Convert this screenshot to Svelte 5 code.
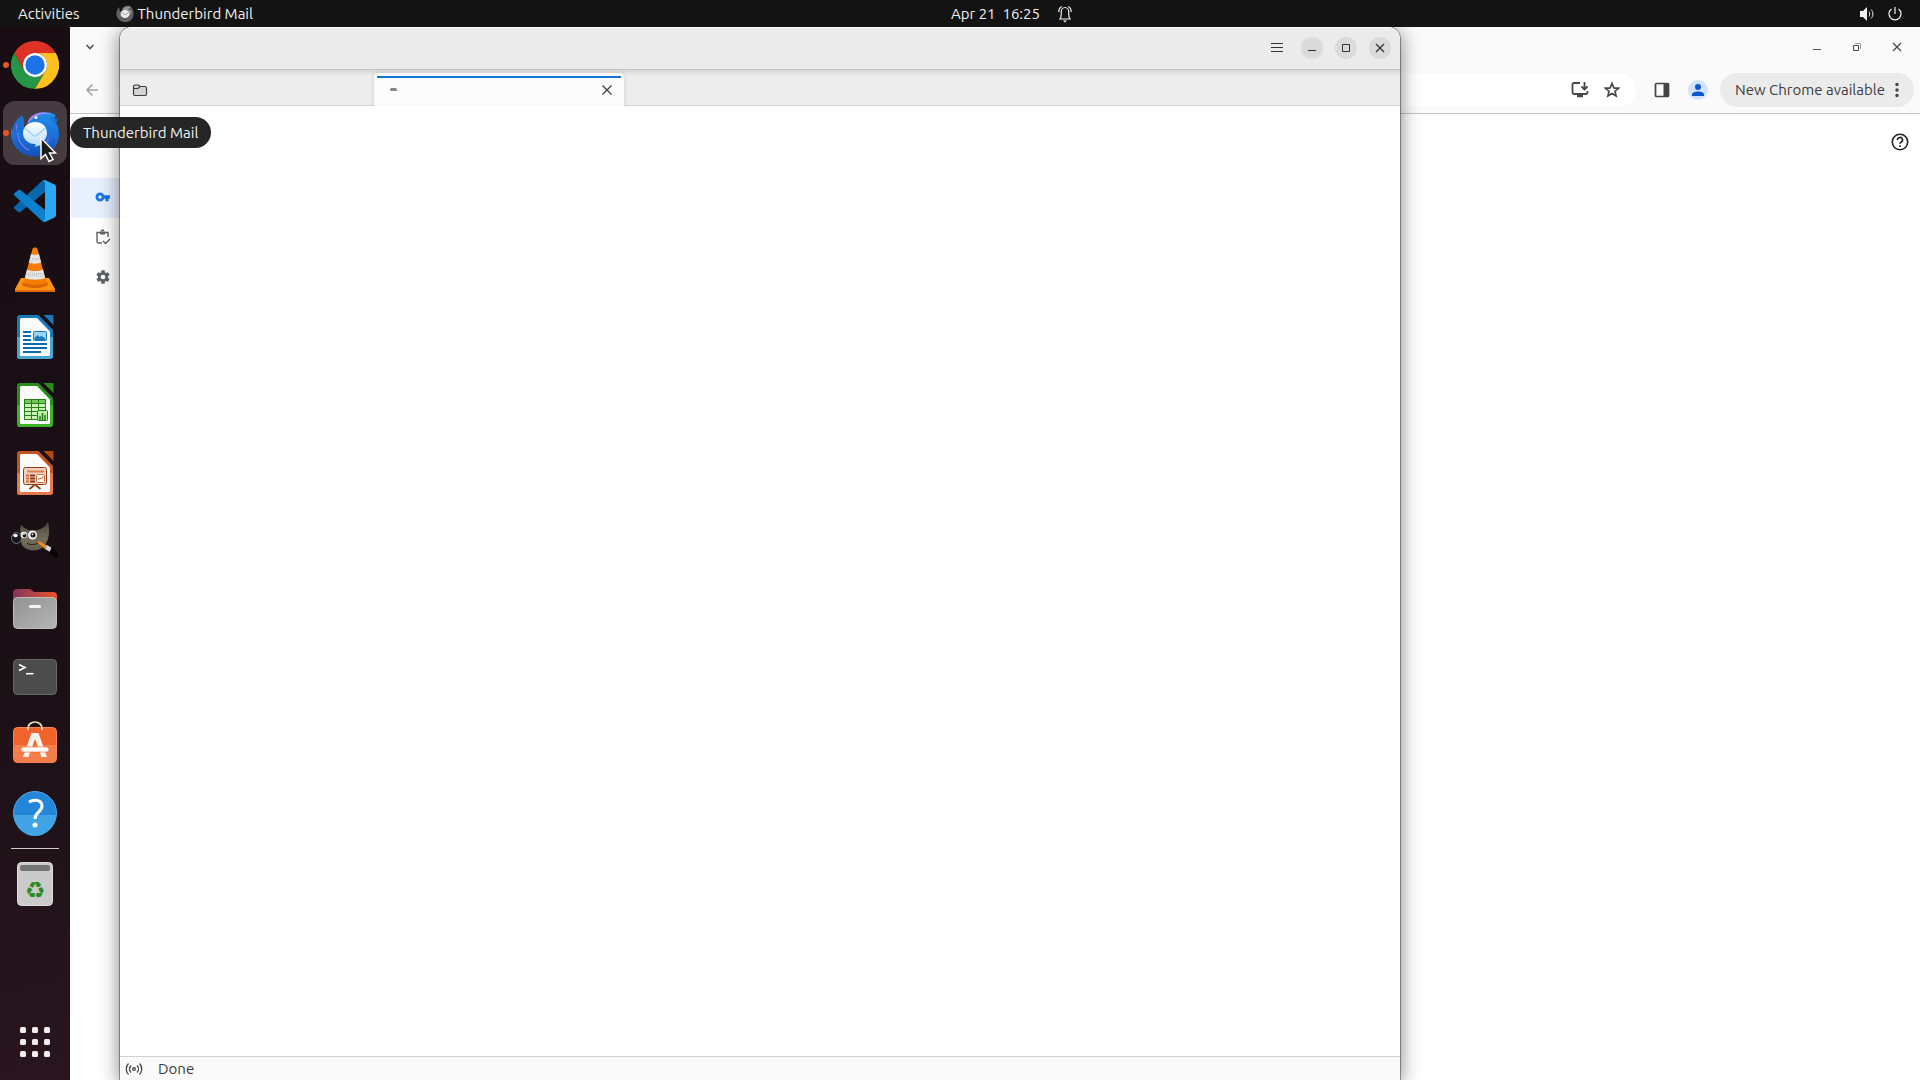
<script>
  const apps = [
    { id: 'chrome', name: 'Google Chrome', running: true },
    { id: 'thunderbird', name: 'Thunderbird Mail', running: true, hovered: true },
    { id: 'code', name: 'Visual Studio Code' },
    { id: 'vlc', name: 'VLC media player' },
    { id: 'writer', name: 'LibreOffice Writer' },
    { id: 'calc', name: 'LibreOffice Calc' },
    { id: 'impress', name: 'LibreOffice Impress' },
    { id: 'gimp', name: 'GNU Image Manipulation Program' },
    { id: 'files', name: 'Files' },
    { id: 'terminal', name: 'Terminal' },
    { id: 'software', name: 'Ubuntu Software' },
    { id: 'help', name: 'Help' }
  ];
  const gridDots = [0, 1, 2].flatMap((r) => [0, 1, 2].map((c) => ({ x: c * 12, y: r * 12 })));
</script>

{#snippet officeDoc(dark, light, fold)}
  <path d="M9 2h18.500L42 17v26a3 3 0 0 1-3 3H9a3 3 0 0 1-3-3V5a3 3 0 0 1 3-3z" fill={dark} />
  <path d="M6 24h36v19a3 3 0 0 1-3 3H9a3 3 0 0 1-3-3z" fill={light} />
  <path d="M10.500 5H26l13 13.500V41.500a1.500 1.500 0 0 1-1.500 1.500h-27A1.500 1.500 0 0 1 9 41.500v-35A1.500 1.500 0 0 1 10.500 5z" fill="#fbfbfb" />
  <path d="M32.500 2H41.500a1 1 0 0 1 1 1v9z" fill={fold} />
{/snippet}

{#snippet appIcon(id)}
  <svg class="app-icon" viewBox="0 0 48 48" aria-hidden="true">
    {#if id === 'chrome'}
      <path d="M3.200 12A24 24 0 0 1 44.800 12H24A12 12 0 0 0 13.600 30z" fill="#df3226" />
      <path d="M3.200 12 13.600 30a12 12 0 0 0 20.800 0L24 48A24 24 0 0 1 3.200 12z" fill="#259645" />
      <path d="M44.800 12A24 24 0 0 1 24 48l10.400-18A12 12 0 0 0 24 12z" fill="#fcc11c" />
      <circle cx="24" cy="24" r="12" fill="#fff" />
      <circle cx="24" cy="24" r="9.700" fill="#1a73e8" />
    {:else if id === 'thunderbird'}
      <defs>
        <linearGradient id="tb-body" x1="0" y1="0" x2="0" y2="1">
          <stop offset="0" stop-color="#1f8fe9" /><stop offset=".6" stop-color="#1a6dd6" /><stop offset="1" stop-color="#1550b8" />
        </linearGradient>
        <linearGradient id="tb-mail" x1="0" y1="0" x2="0" y2="1">
          <stop offset="0" stop-color="#fff" /><stop offset="1" stop-color="#b4dcfa" />
        </linearGradient>
      </defs>
      <path d="M11 6.500C5 11 2 16 2 22 1 21 .5 19 .5 17-.5 23-.3 27 1 31c3 10 12 16.500 23 16.500 14 0 24-10 24-22.500 0-4-1-8-3-11l1.500-4-3.500-2 2-1.500C39 2 29 2 23 6c-4 2.500-6.500 6-6.500 9.500L14 21c-2-5 0-10-3-14.500z" fill="url(#tb-body)" />
      <path d="M16.500 14.500c1-6 7-11 14.500-11 4 0 8 .5 11 2-6-1-13-.5-17 2-4 2-5 4-8.500 7z" fill="#a587ec" />
      <path d="M11 6.500C5 11 2 16 2 22l6 5 6-6c-2-5 0-10-3-14.500z" fill="#1672d2" />
      <path d="M8 18c-4 9-1 17 7 21 11 5 26 1 28-11 3 9-4 17-17 17C9 45 1 34 8 18z" fill="#1458bf" opacity=".7" />
      <path d="M7 23c-1 8 4 15 11 18M6 15c-1 3-1 4 0 7" fill="none" stroke="#7f74e8" stroke-width="1.200" />
      <path d="M24 13c7 0 12 4.500 12 11 0 4-2 7-4 8-1 3-3 5-9 6 2-1 2-2 1-3-7 0-12-5-12-11s5-11 12-11z" fill="url(#tb-mail)" />
      <path d="m13.500 19 9 7.500q1.500 1 3 0l9-7.500" fill="none" stroke="#9fcaf0" stroke-width="1.200" />
      <path d="M31 35c4-2 6-5 7-8 1 6-3 10-7 8z" fill="#5f68db" />
      <circle cx="25" cy="8.500" r="1.500" fill="#fff" />
      <path d="m39 9 7 1-4 2 4 3" fill="none" stroke="#145fca" />
    {:else if id === 'code'}
      <path d="M3.500 29.500c-.8.700-.8 1.500 0 2.300L7 34.800c.8.700 1.600.7 2.400.1L34 15V3.500c-1-.5-2-.2-3 .6z" fill="#0968ad" />
      <path d="M3.500 18.500c-.8-.7-.8-1.500 0-2.300L7 13.200c.8-.7 1.600-.7 2.400-.1L34 33v11.500c-1 .5-2 .2-3-.6z" fill="#0d80cd" />
      <path d="m34 3 9.500 4.500A3 3 0 0 1 45 10v28a3 3 0 0 1-1.500 2.500L34 45l-3-1c1.500.5 3-.5 3-2.500v-35C34 4.500 32.500 3.500 31 4z" fill="#2aa9f2" />
    {:else if id === 'vlc'}
      <path d="M10 33h28l6 11v3H4v-3z" fill="#ff9413" />
      <path d="M4 45h40v2H4z" fill="#dd6900" />
      <path d="M21.500 4c0-2 5-2 5 0l9 34c-4 3.500-19 3.500-23 0z" fill="#f47c00" />
      <path d="m20 9-2.200 8.500c3 1.500 9.400 1.500 12.400 0L28 9c-2 1-6 1-8 0zM16 24.500l-2.200 8.500c4 2.300 16.400 2.300 20.400 0L32 24.500c-4 2-12 2-16 0z" fill="#e6e6e6" />
      <path d="m19 13 10 2m-10 1 10-3M15 29l18 3m-18 0 18-4m-16 0 15 1" stroke="#bbb" stroke-dasharray="1 1" fill="none" />
      <path d="M12 37c5 4 19 4 24 0l1 3c-5 4-21 4-26 0z" fill="#d96400" />
    {:else if id === 'writer'}
      {@render officeDoc('#1879ba', '#4ba5d4', '#1879ba')}
      <path d="M12 19h8m-8 4h8m-8 4h8m-8 4h24m-24 4h24m-24 4h18" stroke="#0869ad" stroke-width="1.800" />
      <rect x="22.500" y="18.500" width="13" height="9" rx="1" fill="#9bd5f5" stroke="#1879ba" />
      <path d="m23.500 27 0-2 3-3 2 2 2-1 2 1 2 2v1z" fill="#1879ba" />
    {:else if id === 'calc'}
      {@render officeDoc('#298d19', '#3eb229', '#298d19')}
      <rect x="13" y="18" width="22" height="20.500" fill="#c9f2b4" />
      <path d="M13 18h22v4H13z" fill="#73c95b" />
      <path d="M13.500 18.500h21v20h-21zM13 22.500h22m-22 4h22m-22 4h22m-22 4h22M20.500 18v20m7-20v20" fill="none" stroke="#257e16" />
      <rect x="26.500" y="29.500" width="10" height="10" rx="1" fill="#b9ec9f" stroke="#257e16" />
      <path d="M29 39v-4m2.500 4v-7m2.500 7v-5" stroke="#257e16" stroke-width="1.500" />
    {:else if id === 'impress'}
      {@render officeDoc('#c35320', '#e6784a', '#b6490f')}
      <path d="m23.500 36-5 4m6-4 5 4" stroke="#8d3d15" stroke-width="1.800" />
      <rect x="12.500" y="18.500" width="23" height="17" rx="2" fill="#f0d5c6" stroke="#8d3d15" />
      <path d="M16 22.500h17" stroke="#e27b45" stroke-width="2" />
      <path d="M15 26.500h3m-3 3h3m-3 3h3" stroke="#d86936" stroke-width="1.800" />
      <path d="M19 26.500h5m-5 3h5m-5 3h5" stroke="#853a13" stroke-width="1.800" />
      <rect x="25.500" y="25.500" width="8" height="8" rx="1" fill="#fff" stroke="#d86936" />
      <path d="m27 31 2-2 1.500 1 2-3" fill="none" stroke="#c35320" />
    {:else if id === 'gimp'}
      <defs>
        <linearGradient id="gimp-fur" x1="0" y1="0" x2="0" y2="1"><stop offset="0" stop-color="#4b4840" /><stop offset=".6" stop-color="#746c5a" /><stop offset="1" stop-color="#665e4d" /></linearGradient>
      </defs>
      <path d="M10 7.500c3 4 7 6 12 6 7 0 12-3 15-8.500 2 8 1.500 17-3 23-4 6-14 7-20 3-3-2-4-4-4-8-1-5-1-11 0-15.500z" fill="url(#gimp-fur)" />
      <ellipse cx="5.500" cy="21" rx="5" ry="5.500" fill="#17191b" stroke="#68737b" />
      <ellipse cx="4.500" cy="18.500" rx="2.200" ry="1.700" fill="#fff" />
      <circle cx="13" cy="18" r="3.300" fill="#eee" /><circle cx="13.500" cy="18.500" r="1.900" fill="#161616" />
      <circle cx="21.500" cy="18" r="4.500" fill="#eee" /><circle cx="22" cy="18" r="2.500" fill="#161616" />
      <circle cx="13" cy="17.500" r=".7" fill="#fff" /><circle cx="21.500" cy="17.300" r=".9" fill="#fff" />
      <path d="M16 26.500c5 2 9 1 12-1" stroke="#201e1a" fill="none" />
      <path d="m26 25 3-.5 7 4-2 3.500z" fill="#f08b1c" />
      <path d="m36 28 5 3-2 4-5-3z" fill="#d1d2d3" />
      <path d="M41 30c4 2 6 6 6 11-4-1-7-3-8.500-6z" fill="#050505" />
    {:else if id === 'files'}
      <defs>
        <linearGradient id="folder-back"><stop offset="0" stop-color="#82345e" /><stop offset="1" stop-color="#ed5525" /></linearGradient>
        <linearGradient id="folder-front" x1="0" y1="0" x2="1" y2="1"><stop offset="0" stop-color="#929292" /><stop offset="1" stop-color="#b5b5b5" /></linearGradient>
      </defs>
      <path d="M2 8a4 4 0 0 1 4-4h12c3 0 3 3 6 3h18a4 4 0 0 1 4 4v12H2z" fill="url(#folder-back)" />
      <rect x="2.500" y="12.500" width="43" height="31" rx="4" fill="url(#folder-front)" stroke="#bebebe" />
      <rect x="18" y="20" width="12" height="3" rx="1.500" fill="#f5f5f5" />
    {:else if id === 'terminal'}
      <rect x="2.500" y="6.500" width="43" height="35" rx="4" fill="#4c4c4c" stroke="#686868" />
      <path d="m8 11.500 6 3-6 3" fill="none" stroke="#fff" stroke-width="1.700" />
      <path d="M15 20.700h7.500" stroke="#fff" stroke-width="1.500" />
    {:else if id === 'software'}
      <rect x="2.500" y="6.500" width="43" height="35" rx="4" fill="#f0642c" stroke="#f58657" />
      <path d="M3 24h42v13.500a4 4 0 0 1-4 4H7a4 4 0 0 1-4-4z" fill="#f37d4b" />
      <path d="M17 9V7a7 6 0 0 1 14 0v2" fill="none" stroke="#efdfae" stroke-width="1.700" />
      <path d="M20.500 12h7L36 36h-5.500L24 18l-6.500 18H12z" fill="#fbf1ed" />
      <rect x="10" y="26" width="28" height="5" rx="2.500" fill="#fff" stroke="#f0642c" stroke-width=".6" />
    {:else if id === 'help'}
      <circle cx="24" cy="24" r="21.500" fill="#2287d9" stroke="#54a9e9" />
      <path d="M3 26h42a21 21 0 0 1-42 0z" fill="#42a3e5" />
      <path d="M18 13c5-3 13-2.500 13 4 0 6-7 6-7 13" fill="none" stroke="#fff" stroke-width="3" />
      <circle cx="24" cy="36" r="2.500" fill="#fff" />
    {:else}
      <rect x="6.500" y="2.500" width="35" height="43" rx="4" fill="#cacaca" stroke="#dedede" />
      <rect x="9" y="5" width="30" height="6" rx="2" fill="#727571" />
      <text x="24" y="38" text-anchor="middle" font-family="DejaVu Sans, sans-serif" font-size="23" fill="#2b8a22">♻</text>
    {/if}
  </svg>
{/snippet}

<div class="screen">
  <header class="topbar">
    <div class="top-left">
      <button>Activities</button>
      <button class="current-app">
        <svg width="18" height="18" viewBox="0 0 18 18" aria-hidden="true">
          <path d="M3 2C0 6 0 9 1 12c3 6 11 7 15 2 2-3 2-8 0-11l-2-2C10 0 6 2 6 5L4 7z" fill="#606060" />
          <path d="M7 4c2-3 6-3 8-2l-3 2 4 3-4 5" fill="#929292" />
          <ellipse cx="9" cy="9" rx="4.500" ry="4" fill="#ececec" /><path d="m5 7 4 3 4-3" fill="none" stroke="#aaa" />
        </svg>
        Thunderbird Mail
      </button>
    </div>
    <button class="clock">
      <span>Apr 21&nbsp; 16:25</span>
      <svg width="16" height="18" viewBox="0 0 16 18" fill="none" stroke="#f2f2f2" stroke-width="1.200" aria-hidden="true">
        <path d="M2 14h12M3.500 13.500c1-2 .7-4 .7-6C4.200 4.500 6 2.500 8 2.500s3.800 2 3.800 5c0 2-.3 4 .7 6M1.800 7c0-3 1-4.500 3-5.500m9.400 5.500c0-3-1-4.500-3-5.500" />
        <path d="M6 15.500h4L8 17.500z" fill="#f2f2f2" stroke="none" />
      </svg>
    </button>
    <button class="status-menu" aria-label="System menu">
      <svg width="16" height="16" viewBox="0 0 16 16" aria-hidden="true">
        <path d="M1 5h3l4-4v14l-4-4H1z" fill="#f2f2f2" />
        <path d="M10 5.500c1 1.500 1 3.500 0 5M12 3.500c2.500 2.500 2.500 6.500 0 9" fill="none" stroke="#f2f2f2" />
      </svg>
      <svg width="16" height="16" viewBox="0 0 16 16" fill="none" stroke="#f2f2f2" stroke-width="1.200" aria-hidden="true">
        <path d="M8 1v7M4.500 3A6 6 0 1 0 11.500 3" />
      </svg>
    </button>
  </header>

  <div class="workspace">
    <nav class="dock" aria-label="Dock">
      {#each apps as app (app.id)}
        <button class="dock-item" class:hovered={app.hovered} aria-label={app.name}>
          {#if app.running}<span class="running"></span>{/if}
          {@render appIcon(app.id)}
          {#if app.hovered}
            <span class="tooltip">{app.name}</span>
            <svg class="pointer" width="20" height="28" viewBox="0 0 20 28" aria-hidden="true">
              <path d="M2 2v20.500l4.500-4 3.500 7 4-2-3.500-6.500h6z" fill="#1b1b1b" stroke="#fff" stroke-width="1.500" />
            </svg>
          {/if}
        </button>
      {/each}
      <hr />
      <button class="dock-item" aria-label="Trash">{@render appIcon('trash')}</button>
      <button class="dock-item grid" aria-label="Show Applications">
        <svg width="30" height="30" viewBox="0 0 30 30" fill="#f0eeec" aria-hidden="true">
          {#each gridDots as d}<rect x={d.x} y={d.y} width="6" height="6" rx="1.500" />{/each}
        </svg>
      </button>
    </nav>

    <main class="desktop">
      <section class="browser" aria-label="Google Chrome">
        <div class="browser-title">
          <button aria-label="Search tabs">
            <svg width="16" height="16" viewBox="0 0 16 16" fill="none" stroke="#555" stroke-width="1.700"><path d="m4.500 6 3.500 3.500L11.500 6" /></svg>
          </button>
          <div class="browser-controls">
            <button aria-label="Minimize"><svg width="16" height="16" viewBox="0 0 16 16"><path d="M4 10.500h8" stroke="#555" /></svg></button>
            <button aria-label="Restore">
              <svg width="16" height="16" viewBox="0 0 16 16" fill="none"><path d="M6 4.500h5.500V10" stroke="#999" /><path d="M4.500 6.500h5v5h-5z" stroke="#444" /></svg>
            </button>
            <button aria-label="Close"><svg width="16" height="16" viewBox="0 0 16 16"><path d="m4 4 8 8m0-8-8 8" stroke="#444" stroke-width="1.200" /></svg></button>
          </div>
        </div>
        <div class="browser-bar">
          <button aria-label="Back">
            <svg width="16" height="16" viewBox="0 0 16 16" fill="none" stroke="#a3a3a3" stroke-width="1.600"><path d="M14 8H3m5.500-5.500L3 8l5.500 5.500" /></svg>
          </button>
          <div class="omnibox">
            <input aria-label="Address and search bar" />
            <button aria-label="Install">
              <svg width="18" height="18" viewBox="0 0 18 18" fill="none" stroke="#474747" stroke-width="1.800">
                <path d="M9 2H3a1.500 1.500 0 0 0-1.500 1.500v8A1.500 1.500 0 0 0 3 13h12a1.500 1.500 0 0 0 1.500-1.500V10M13.500 1v7m-3-2.500 3 3 3-3" /><path d="M6 15h6" stroke-width="2.500" />
              </svg>
            </button>
            <button aria-label="Bookmark">
              <svg width="18" height="18" viewBox="0 0 18 18" fill="none" stroke="#474747" stroke-width="1.700"><path d="m9 2.500 1.900 4.400 4.700.4-3.600 3.100 1.100 4.600L9 12.500l-4.100 2.500L6 10.400 2.400 7.300l4.700-.4z" /></svg>
            </button>
          </div>
          <button aria-label="Side panel">
            <svg width="16" height="16" viewBox="0 0 16 16"><rect x="1.500" y="1.500" width="13" height="13" rx="1" fill="none" stroke="#444" stroke-width="1.700" /><path d="M9.500 1H15v14H9.500z" fill="#444" /></svg>
          </button>
          <button class="profile" aria-label="Profile">
            <svg width="14" height="14" viewBox="0 0 14 14" fill="#0b57d0"><circle cx="7" cy="4" r="3" /><path d="M1 13v-1.500C1 9.500 4 8.500 7 8.500s6 1 6 3V13z" /></svg>
          </button>
          <button class="update">
            <span>New Chrome available</span>
            <svg width="4" height="16" viewBox="0 0 4 16" fill="#444"><circle cx="2" cy="2.500" r="1.700" /><circle cx="2" cy="8" r="1.700" /><circle cx="2" cy="13.500" r="1.700" /></svg>
          </button>
        </div>
        <div class="page">
          <nav class="side" aria-label="Password manager">
            <a class="selected" href="#passwords" aria-label="Passwords">
              <svg width="16" height="16" viewBox="0 0 16 16"><path fill-rule="evenodd" d="M5 3.500c2 0 3.300 1 4 2.700h6v3.500h-1.500v2.500H10.500V9.800H9c-.7 1.700-2 2.700-4 2.700A4.500 4.500 0 0 1 5 3.500zM5 6.300a1.700 1.700 0 1 0 0 3.400 1.700 1.700 0 0 0 0-3.400z" fill="#1a73e8" /></svg>
            </a>
            <a href="#checkup" aria-label="Checkup">
              <svg width="16" height="16" viewBox="0 0 16 16" fill="none" stroke="#5f6368" stroke-width="1.400"><path d="M7 14H3.500A1.500 1.500 0 0 1 2 12.500v-9h11V8M8 12l2.500 2.500L15 10" /><path d="M5 2.500h5v3H5z" fill="#5f6368" stroke="none" /><path d="M6.500 2a1 1 0 0 1 2 0" /></svg>
            </a>
            <a href="#settings" aria-label="Settings">
              <svg width="16" height="16" viewBox="0 0 24 24" fill="#5f6368"><path d="M19.430 12.980c.04-.32.070-.64.070-.98s-.03-.66-.07-.98l2.110-1.650c.19-.15.240-.42.120-.64l-2-3.460c-.12-.22-.39-.3-.61-.22l-2.490 1c-.52-.4-1.080-.73-1.690-.98l-.38-2.650A.488.488 0 0 0 14 2h-4c-.25 0-.46.180-.49.420l-.38 2.650c-.61.250-1.170.590-1.690.980l-2.490-1c-.23-.09-.49 0-.61.220l-2 3.460c-.13.220-.07.490.12.640l2.110 1.650c-.04.320-.07.650-.07.980s.03.660.070.980l-2.110 1.650c-.19.150-.24.420-.12.640l2 3.460c.12.220.39.300.61.220l2.490-1c.52.400 1.080.730 1.690.980l.38 2.650c.03.240.24.420.49.420h4c.25 0 .46-.18.490-.42l.38-2.650c.61-.25 1.170-.59 1.690-.98l2.490 1c.23.090.49 0 .61-.22l2-3.460c.12-.22.070-.49-.12-.64zM12 15.500a3.500 3.500 0 1 1 0-7 3.500 3.500 0 0 1 0 7z" /></svg>
            </a>
          </nav>
          <button class="page-help" aria-label="Help">
            <svg width="18" height="18" viewBox="0 0 18 18" fill="none" stroke="#202124" stroke-width="1.600"><circle cx="9" cy="9" r="7.700" /><path d="M6.500 7A2.500 2.500 0 1 1 10 9.200c-.7.400-1 .8-1 1.600" /><path d="M9 12.200v1.700" /></svg>
          </button>
        </div>
      </section>

      <section class="mail" aria-label="Thunderbird Mail">
        <div class="mail-title">
          <button class="menu" aria-label="Application menu"><svg width="12" height="12" viewBox="0 0 12 12" stroke="#333"><path d="M0 1.500h12M0 5.500h12M0 9.500h12" /></svg></button>
          <button class="round" aria-label="Minimize"><svg width="12" height="12" viewBox="0 0 12 12" stroke="#333"><path d="M2 8.500h8" /></svg></button>
          <button class="round" aria-label="Maximize"><svg width="12" height="12" viewBox="0 0 12 12" stroke="#333" fill="none"><path d="M2.500 2.500h7v7h-7z" /></svg></button>
          <button class="round" aria-label="Close"><svg width="12" height="12" viewBox="0 0 12 12" stroke="#333" stroke-width="1.300"><path d="m2 2 8 8m0-8-8 8" /></svg></button>
        </div>
        <div class="mail-tabs">
          <button class="folder-tab" aria-label="Mail folders">
            <svg width="16" height="16" viewBox="0 0 16 16" fill="#d4d4d4" stroke="#3c3c3c" stroke-width="1.200"><path d="M3 3h3.500L8 4.500h5A1.500 1.500 0 0 1 14.500 6v6a1.500 1.500 0 0 1-1.500 1.500H3A1.500 1.500 0 0 1 1.500 12V4.500A1.500 1.500 0 0 1 3 3z" /><path d="M1.500 6.500H6L8 4.500" fill="none" /></svg>
          </button>
          <div class="active-tab">
            <span class="loading"></span>
            <button aria-label="Close tab"><svg width="12" height="12" viewBox="0 0 12 12" stroke="#444" stroke-width="1.400"><path d="m1.500 1.500 9 9m0-9-9 9" /></svg></button>
          </div>
        </div>
        <div class="mail-body"></div>
        <footer class="mail-status">
          <svg width="18" height="16" viewBox="0 0 18 16" fill="none" stroke="#444" stroke-width="1.300" aria-hidden="true">
            <circle cx="9" cy="8" r="1.300" /><path d="M6 4.500c-2 2-2 5 0 7m6-7c2 2 2 5 0 7M3.500 2.500c-3 3-3 8 0 11m11-11c3 3 3 8 0 11" />
          </svg>
          <span>Done</span>
        </footer>
      </section>
    </main>
  </div>
</div>

<style>
  :global(body) { margin: 0; }
  .screen {
    display: flex; flex-direction: column; height: 100vh; overflow: hidden;
    font-family: Ubuntu, "Noto Sans", sans-serif; font-size: 15px; line-height: 20px; color: #3d3d3d;
  }
  button { display: flex; align-items: center; justify-content: center; border: 0; padding: 0; background: none; font: inherit; color: inherit; white-space: nowrap; }
  svg { display: block; flex: none; }

  .topbar { display: grid; grid-template-columns: 1fr auto 1fr; align-items: center; height: 27px; background: #131313; color: #f2f2f2; flex: none; }
  .top-left { display: flex; gap: 36px; padding-left: 18px; }
  .current-app { gap: 4px; }
  .clock { gap: 17px; padding-left: 104px; }
  .status-menu { justify-self: end; gap: 12px; padding-right: 17px; }

  .workspace { display: flex; flex: 1; min-height: 0; }
  .dock { position: relative; z-index: 2; box-sizing: border-box; display: flex; flex-direction: column; align-items: center; gap: 4px; width: 70px; padding: 6px 0; background: linear-gradient(165deg, #180d13 0%, #1b1016 60%, #29151f 100%); flex: none; }
  .dock-item { position: relative; width: 64px; height: 64px; border-radius: 12px; flex: none; }
  .dock-item.hovered { background: #453b41; }
  .app-icon { width: 48px; height: 48px; }
  .running { position: absolute; left: 0; top: 29px; width: 6px; height: 6px; border-radius: 3px; background: #e95420; }
  .dock hr { width: 48px; height: 1px; margin: -1px 0; border: 0; background: #d0cdce; }
  .dock-item.grid { margin-top: auto; }
  .tooltip { position: absolute; left: 67px; top: 16px; box-sizing: border-box; height: 31px; padding: 6px 13px; border-radius: 16px; background: #1f1f1ff7; color: #f2f2f2; line-height: 20px; }
  .pointer { position: absolute; left: 36px; top: 35px; }

  .desktop { position: relative; flex: 1; min-width: 0; overflow: hidden; }
  .browser { position: absolute; inset: 0; display: flex; flex-direction: column; background: #fff; }
  .browser-title { display: flex; justify-content: space-between; height: 46px; padding: 0 15px 6px 12px; box-sizing: border-box; background: #fafafa; }
  .browser-controls { display: flex; gap: 24px; }
  .browser-bar { display: flex; align-items: center; height: 40px; box-sizing: border-box; padding: 0 6px 6px 14px; background: #fafafa; box-shadow: 0 1px #c4c4c4; }
  .omnibox { display: flex; align-items: center; gap: 14px; flex: 1; height: 34px; box-sizing: border-box; margin: 0 18px; padding-right: 15px; border-radius: 17px; background: #fff; }
  .omnibox input { flex: 1; min-width: 0; border: 0; outline: 0; background: none; }
  .profile { width: 20px; height: 20px; margin: 0 12px 0 18px; border-radius: 10px; background: #d3e3fd; }
  .update { height: 34px; gap: 10px; padding: 0 15px; border-radius: 17px; background: #ebebeb; }
  .page { display: flex; justify-content: space-between; align-items: flex-start; padding: 20px 11px 0 1px; }
  .side { width: 200px; padding-top: 45px; }
  .side a { display: flex; align-items: center; height: 40px; padding: 0 0 3px 24px; box-sizing: border-box; }
  .side a.selected { background: #e8f0fe; }

  .mail {
    position: absolute; inset: 0 520px 0 50px; display: flex; flex-direction: column;
    border-radius: 12px 12px 0 0; overflow: hidden; background: #fff;
    box-shadow: 0 0 0 1px #00000055, 0 3px 20px #00000088;
  }
  .mail-title { display: flex; align-items: center; justify-content: flex-end; gap: 12px; height: 43px; box-sizing: border-box; padding-right: 9px; background: #ebebeb; border-bottom: 1px solid #c4c4c4; box-shadow: inset 0 1px #fafafa; }
  .menu { margin-right: 6px; }
  .round { width: 22px; height: 22px; border-radius: 11px; background: #dadada; }
  .mail-tabs { display: flex; height: 36px; box-sizing: border-box; background: linear-gradient(#d8d8d8, #ededed 6px); border-bottom: 1px solid #d2d2d2; }
  .folder-tab { justify-content: flex-start; width: 254px; padding: 4px 0 0 12px; box-sizing: border-box; }
  .active-tab { display: flex; align-items: center; justify-content: space-between; width: 250px; box-sizing: border-box; margin: 3px 0 -1px; padding: 0 11px 0 16px; border-radius: 4px 4px 0 0; background: linear-gradient(#1373d9, #1373d9) 3px 3px / 244px 2px no-repeat #fbfbfb; box-shadow: 0 0 5px #0002; clip-path: inset(-4px -6px 0); }
  .loading { width: 7px; height: 3px; border-radius: 2px; background: #858585; }
  .mail-body { flex: 1; }
  .mail-status { display: flex; align-items: center; gap: 15px; height: 24px; box-sizing: border-box; padding-left: 5px; background: #fafafa; border-top: 1px solid #d2d2d2; }
</style>
